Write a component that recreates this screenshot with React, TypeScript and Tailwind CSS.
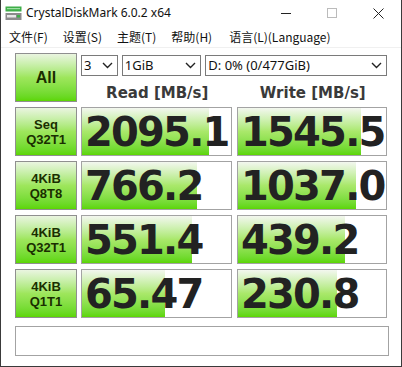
import React from "react";

const rows = [
  { l1: "Seq", l2: "Q32T1", r: "2095.1", w: "1545.5" },
  { l1: "4KiB", l2: "Q8T8", r: "766.2", w: "1037.0" },
  { l1: "4KiB", l2: "Q32T1", r: "551.4", w: "439.2" },
  { l1: "4KiB", l2: "Q1T1", r: "65.47", w: "230.8" },
];

const fill = (v: string) => Math.min(1, Math.log10(parseFloat(v) * 10) / 5.05);

function Chevron() {
  return (
    <svg width="11" height="7" viewBox="0 0 11 7" className="shrink-0">
      <path d="M1 1 L5.5 5.5 L10 1" fill="none" stroke="#222" strokeWidth="1.4" />
    </svg>
  );
}

function Select({ w, text }: { w: string; text: string }) {
  return (
    <div className={`${w} h-[21px] border border-[#7a7a7a] bg-white flex items-center justify-between pl-[2px] pr-[4px] text-[13px] text-[#111] font-['Noto_Sans',sans-serif]`}>
      <span className="leading-none">{text}</span>
      <Chevron />
    </div>
  );
}

function Result({ v }: { v: string }) {
  const f = fill(v);
  return (
    <div className="relative h-[49px] border border-[#a3a3a3] bg-white overflow-hidden">
      <div
        className="absolute left-0 top-0 bottom-0 bg-gradient-to-b from-[#f3f7ef] via-[#a9e86a] to-[#5cd600]"
        style={{ width: `${f * 100}%` }}
      />
      <div className="relative h-full flex items-center pl-[3px] text-[40px] font-bold text-[#222] leading-none font-['DejaVu_Sans',sans-serif] whitespace-nowrap tracking-[-1.8px]">
        {v}
      </div>
    </div>
  );
}

function GreenButton({ children }: { children: React.ReactNode }) {
  return (
    <div className="h-[49px] border border-[#8f8f8f] bg-gradient-to-b from-[#eaf5e0] via-[#9ee65c] to-[#5cd600] flex flex-col items-center justify-center text-[#1a2e00] font-bold font-['Liberation_Sans',sans-serif] leading-[15px]">
      {children}
    </div>
  );
}

export default function App() {
  return (
    <div className="w-[402px] h-[367px] bg-white border-x border-b border-[#3a3a3a] overflow-hidden flex flex-col font-['Noto_Sans','Noto_Sans_CJK_SC',sans-serif]">
      {/* Title bar */}
      <div className="h-[26px] flex items-center shrink-0">
        <svg width="17" height="15" viewBox="0 0 17 15" className="ml-[4px] mr-[4px]">
          <rect x="0.5" y="0.5" width="16" height="5" fill="#3fae49" />
          <rect x="2" y="2" width="13" height="1.2" fill="#9fe0a4" />
          <rect x="0.5" y="7" width="16" height="7" fill="#8c8c8c" />
          <rect x="2" y="9" width="9" height="2.5" fill="#e8e8e8" />
          <rect x="12" y="9" width="3" height="2.5" fill="#3fae49" />
        </svg>
        <span className="text-[12px] text-[#111] leading-none">CrystalDiskMark 6.0.2 x64</span>
        <div className="ml-auto flex items-center h-full">
          <div className="w-[46px] h-full flex items-center justify-center">
            <div className="w-[10px] h-px bg-[#222]" />
          </div>
          <div className="w-[46px] h-full flex items-center justify-center">
            <div className="w-[10px] h-[10px] border border-[#bbb]" />
          </div>
          <div className="w-[46px] h-full flex items-center justify-center">
            <svg width="11" height="11" viewBox="0 0 11 11">
              <path d="M0.5 0.5 L10.5 10.5 M10.5 0.5 L0.5 10.5" stroke="#222" strokeWidth="1" />
            </svg>
          </div>
        </div>
      </div>
      {/* Menu */}
      <div className="h-[22px] flex items-center pl-[8px] gap-[15px] text-[12px] text-[#111] font-['Noto_Sans_CJK_SC','Noto_Sans',sans-serif] border-b border-[#f0f0f0] shrink-0">
        <span>文件(F)</span>
        <span>设置(S)</span>
        <span>主题(T)</span>
        <span>帮助(H)</span>
        <span className="ml-[2px]">语言(L)(Language)</span>
      </div>
      {/* Main */}
      <div className="pl-[14px] pt-[5px] w-[388px]">
        <div className="grid grid-cols-[62px_151px_151px] gap-x-[4px] gap-y-[5px]">
          <GreenButton>
            <span className="text-[16px]">All</span>
          </GreenButton>
          <div className="col-span-2 flex flex-col">
            <div className="flex gap-[4px] mt-[2px]">
              <Select w="w-[37px]" text="3" />
              <Select w="w-[80px]" text="1GiB" />
              <Select w="w-[183px]" text="D: 0% (0/477GiB)" />
            </div>
            <div className="grid grid-cols-2 gap-x-[5px] mt-[10px] text-[15px] font-bold text-[#3a3a3a] font-['DejaVu_Sans',sans-serif] leading-none">
              <div className="text-center pl-[2px]">Read [MB/s]</div>
              <div className="text-center pl-[2px]">Write [MB/s]</div>
            </div>
          </div>
          {rows.map((r, i) => (
            <React.Fragment key={i}>
              <GreenButton>
                <span className="text-[13px]">{r.l1}</span>
                <span className="text-[13px]">{r.l2}</span>
              </GreenButton>
              <Result v={r.r} />
              <div className="ml-[1px]">
                <Result v={r.w} />
              </div>
            </React.Fragment>
          ))}
        </div>
        <div className="mt-[8px] h-[30px] w-[374px] border border-[#a3a3a3] bg-white" />
      </div>
    </div>
  );
}
